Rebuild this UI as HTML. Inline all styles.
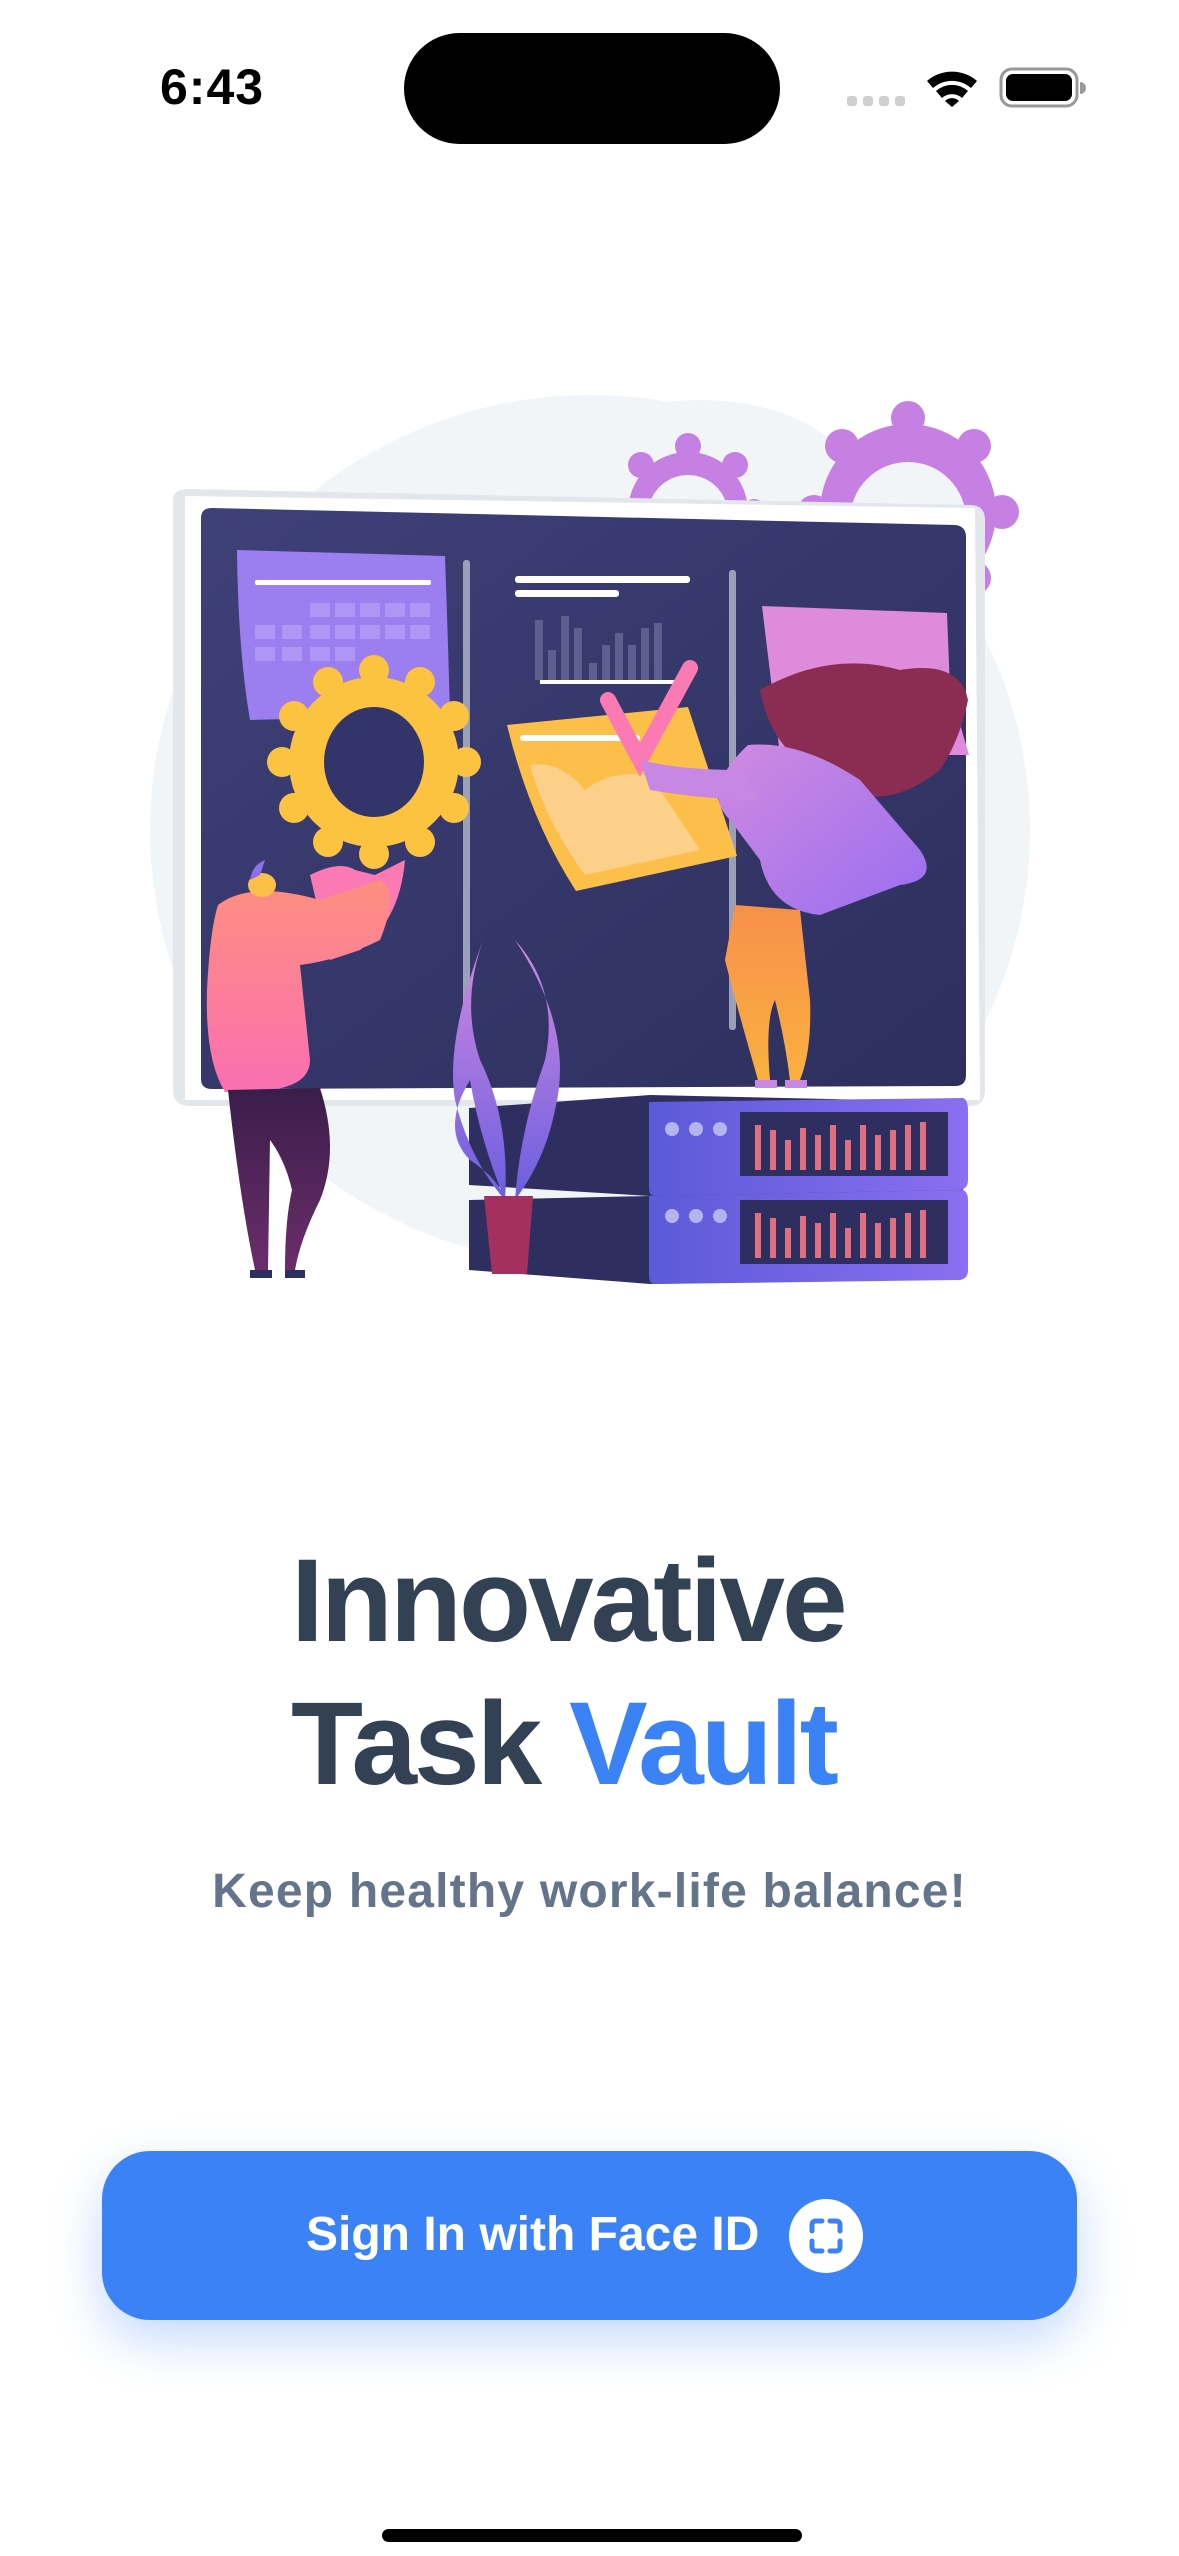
<!DOCTYPE html>
<html><head><meta charset="utf-8"><style>
html,body{margin:0;padding:0;background:#fff;}
body{width:1179px;height:2556px;position:relative;overflow:hidden;font-family:"Liberation Sans",sans-serif;}
.abs{position:absolute;}
.time{left:160px;top:58px;font-size:50px;font-weight:700;color:#000;letter-spacing:1px;}
.island{left:404px;top:33px;width:376px;height:111px;background:#000;border-radius:56px;}
.t1{left:291px;top:1530px;font-size:118px;font-weight:700;color:#334155;line-height:143px;letter-spacing:-3px;white-space:nowrap;}
.sub{left:0;width:1179px;text-align:center;top:1864px;font-size:48px;font-weight:700;color:#64748b;letter-spacing:1.2px;}
.btn{left:102px;top:2151px;width:975px;height:169px;background:#3b82f6;border-radius:48px;box-shadow:0 20px 50px rgba(59,130,246,0.3);}
.btxt{left:306px;top:2207px;font-size:48px;font-weight:700;color:#fff;}
.home{left:382px;top:2529px;width:420px;height:13px;border-radius:7px;background:#000;}
</style></head><body>
<div class="abs time">6:43</div>
<div class="abs island"></div>
<svg class="abs" style="left:0;top:0" width="1179" height="160">
<g fill="#d0d0d0"><rect x="847" y="96" width="10" height="10" rx="3"/><rect x="863" y="96" width="10" height="10" rx="3"/><rect x="879" y="96" width="10" height="10" rx="3"/><rect x="895" y="96" width="10" height="10" rx="3"/></g>
<path d="M927 81 A38 38 0 0 1 977 81 L971 88 A29 29 0 0 0 933 88Z M936 91 A24 24 0 0 1 968 91 L962 98 A15 15 0 0 0 942 98Z M945 101 A10 10 0 0 1 959 101 L952 107Z" fill="#000"/>
<rect x="1001" y="69" width="76" height="37" rx="11" fill="none" stroke="#999" stroke-width="3"/>
<rect x="1006" y="74" width="66" height="27" rx="7" fill="#000"/>
<path d="M1080 82 a5 5 0 0 1 0 12z" fill="#999"/>
</svg>

<svg class="abs" style="left:0;top:0" width="1179" height="1400">
<defs>
<linearGradient id="scr" x1="0" y1="0" x2="1" y2="1"><stop offset="0" stop-color="#3e4078"/><stop offset="1" stop-color="#2d2f5e"/></linearGradient>
<linearGradient id="pink" x1="0" y1="0" x2="0" y2="1"><stop offset="0" stop-color="#fd8f80"/><stop offset="1" stop-color="#fb6fb0"/></linearGradient>
<linearGradient id="leg" x1="0" y1="0" x2="0" y2="1"><stop offset="0" stop-color="#3a1d4a"/><stop offset="1" stop-color="#6b2d6a"/></linearGradient>
<linearGradient id="srv" x1="0" y1="0" x2="1" y2="0"><stop offset="0" stop-color="#5b5ad8"/><stop offset="1" stop-color="#8a6ff0"/></linearGradient>
<linearGradient id="dress" x1="0" y1="0" x2="1" y2="1"><stop offset="0" stop-color="#d08ae0"/><stop offset="1" stop-color="#9a6ef0"/></linearGradient>
<linearGradient id="oleg" x1="0" y1="0" x2="0" y2="1"><stop offset="0" stop-color="#f7904a"/><stop offset="1" stop-color="#fbb040"/></linearGradient>
<linearGradient id="leaf" x1="0" y1="0" x2="0" y2="1"><stop offset="0" stop-color="#d58ae0"/><stop offset="1" stop-color="#6a5ee0"/></linearGradient>
</defs>
<ellipse cx="590" cy="830" rx="440" ry="435" fill="#f2f5f8"/>
<ellipse cx="700" cy="480" rx="150" ry="80" fill="#f2f5f8"/>
<g fill="#c67fe3">
<circle cx="688" cy="512" r="60"/>
<circle cx="688" cy="446" r="13"/><circle cx="735" cy="465" r="13"/><circle cx="754" cy="512" r="13"/><circle cx="735" cy="559" r="13"/><circle cx="641" cy="465" r="13"/><circle cx="622" cy="512" r="13"/><circle cx="641" cy="559" r="13"/>
<circle cx="908" cy="512" r="88"/>
<circle cx="908" cy="418" r="17"/><circle cx="974" cy="446" r="17"/><circle cx="1002" cy="512" r="17"/><circle cx="974" cy="578" r="17"/><circle cx="842" cy="446" r="17"/><circle cx="814" cy="512" r="17"/><circle cx="842" cy="578" r="17"/>
</g>
<circle cx="688" cy="515" r="40" fill="#f2f5f8"/><circle cx="908" cy="520" r="58" fill="#f2f5f8"/>
<path d="M173 500 Q173 489 190 489 L970 505 Q985 505 985 520 L985 1090 Q985 1106 970 1106 L190 1106 Q173 1106 173 1090Z" fill="#e3e7ec"/>
<path d="M185 496 L975 508 L980 1100 L185 1100Z" fill="#fff"/>
<path d="M201 518 Q201 508 212 508 L955 525 Q966 526 966 537 L966 1075 Q966 1086 955 1086 L212 1089 Q201 1089 201 1079Z" fill="url(#scr)"/>
<rect x="463" y="560" width="7" height="480" rx="3" fill="#9aa0b8"/>
<rect x="729" y="570" width="7" height="460" rx="3" fill="#9aa0b8"/>
<path d="M237 550 L445 556 Q448 640 450 715 L250 720 Q238 650 237 550Z" fill="#9b7ef0"/>
<rect x="255" y="580" width="176" height="5" rx="2" fill="#fff"/>
<g fill="#b39cf5" opacity=".8">
<rect x="310" y="603" width="20" height="14"/><rect x="335" y="603" width="20" height="14"/><rect x="360" y="603" width="20" height="14"/><rect x="385" y="603" width="20" height="14"/><rect x="410" y="603" width="20" height="14"/>
<rect x="255" y="625" width="20" height="14"/><rect x="282" y="625" width="20" height="14"/><rect x="310" y="625" width="20" height="14"/><rect x="335" y="625" width="20" height="14"/><rect x="360" y="625" width="20" height="14"/><rect x="385" y="625" width="20" height="14"/><rect x="410" y="625" width="20" height="14"/>
<rect x="255" y="647" width="20" height="14"/><rect x="282" y="647" width="20" height="14"/><rect x="310" y="647" width="20" height="14"/><rect x="335" y="647" width="20" height="14"/>
</g>
<rect x="515" y="576" width="175" height="7" rx="3" fill="#fff"/>
<rect x="515" y="590" width="104" height="7" rx="3" fill="#fff"/>
<g fill="#5d608f"><rect x="535" y="620" width="8" height="60"/><rect x="548" y="650" width="8" height="30"/><rect x="561" y="616" width="8" height="64"/><rect x="574" y="628" width="8" height="52"/><rect x="589" y="663" width="8" height="17"/><rect x="602" y="645" width="8" height="35"/><rect x="615" y="633" width="8" height="47"/><rect x="628" y="645" width="8" height="35"/><rect x="641" y="628" width="8" height="52"/><rect x="654" y="623" width="8" height="57"/></g>
<rect x="540" y="680" width="150" height="4" fill="#fff"/>
<path d="M507 725 L688 707 L737 856 L576 891 Q530 820 507 725Z" fill="#fbbf4a"/>
<path d="M530 765 Q560 760 585 790 Q610 770 650 775 L700 850 L585 875 Q545 820 530 765Z" fill="#fcd088"/>
<rect x="520" y="735" width="120" height="6" rx="3" fill="#fff"/>
<path d="M608 700 L640 760 L690 668" stroke="#fb7ab4" stroke-width="16" fill="none" stroke-linecap="round"/>
<path d="M762 606 L947 613 L950 690 L969 755 L780 755Z" fill="#df8bdc"/>
<g fill="#fcc341">
<circle cx="374" cy="762" r="85"/>
<circle cx="374" cy="670" r="15"/><circle cx="420" cy="682" r="15"/><circle cx="454" cy="716" r="15"/><circle cx="466" cy="762" r="15"/><circle cx="454" cy="808" r="15"/><circle cx="420" cy="842" r="15"/><circle cx="374" cy="854" r="15"/><circle cx="328" cy="842" r="15"/><circle cx="294" cy="808" r="15"/><circle cx="282" cy="762" r="15"/><circle cx="294" cy="716" r="15"/><circle cx="328" cy="682" r="15"/>
</g>
<ellipse cx="374" cy="762" rx="50" ry="55" fill="#33356a"/>
<path d="M310 875 Q340 860 355 870 L375 875 L405 860 Q400 920 360 950 L330 960Z" fill="#fb7ab4"/>
<path d="M218 905 Q250 880 320 900 L380 880 Q400 890 380 940 Q340 960 300 965 L310 1060 Q310 1085 270 1090 L225 1092 Q205 1060 207 990 Q210 930 218 905Z" fill="url(#pink)"/>
<ellipse cx="262" cy="885" rx="14" ry="12" fill="#fbbf4a"/>
<path d="M250 880 Q252 865 265 860 L260 875Z" fill="#8b6ff0"/>
<path d="M228 1090 L320 1088 Q340 1150 320 1200 Q300 1240 295 1270 L285 1270 Q285 1220 292 1190 Q285 1160 270 1140 L268 1270 L255 1270 Q240 1200 228 1090Z" fill="url(#leg)"/>
<path d="M250 1270 h22 v8 h-22z M285 1270 h20 v8 h-20z" fill="#2d2f5e"/>
<path d="M760 690 Q830 650 900 670 Q960 660 968 700 Q960 740 940 770 Q890 810 840 790 L800 760 Q770 740 760 690Z" fill="#8b2d52"/>
<path d="M748 745 Q800 740 860 780 L920 850 Q940 880 900 885 L820 915 Q770 910 760 860 L730 820 Q700 790 748 745Z" fill="url(#dress)"/>
<path d="M640 760 Q680 770 740 770 L760 800 Q710 800 650 790Z" fill="#c887e3"/>
<path d="M735 905 L800 910 L810 1000 Q812 1050 800 1080 L790 1080 Q785 1040 775 1000 Q765 1020 770 1080 L758 1080 Q735 1000 725 960Z" fill="url(#oleg)"/>
<path d="M755 1080 h22 v8 h-22z M785 1080 h22 v8 h-22z" fill="#c887e3"/>
<path d="M469 1108 L650 1095 L963 1102 L963 1190 L650 1196 L469 1185Z" fill="#2e2f60"/>
<path d="M649 1102 L963 1098 Q968 1100 968 1110 L968 1180 Q968 1190 958 1190 L655 1196 Q649 1196 649 1188Z" fill="url(#srv)"/>
<path d="M469 1200 L650 1196 L963 1190 L963 1278 L650 1284 L469 1270Z" fill="#2e2f60"/>
<path d="M649 1196 L963 1190 Q968 1192 968 1200 L968 1270 Q968 1280 958 1280 L655 1284 Q649 1284 649 1276Z" fill="url(#srv)"/>
<rect x="740" y="1112" width="208" height="64" fill="#2e2f60"/>
<rect x="740" y="1200" width="208" height="64" fill="#2e2f60"/>
<g fill="#e07080"><rect x="755" y="1125" width="6" height="45"/><rect x="770" y="1130" width="6" height="40"/><rect x="785" y="1140" width="6" height="30"/><rect x="800" y="1128" width="6" height="42"/><rect x="815" y="1135" width="6" height="35"/><rect x="830" y="1125" width="6" height="45"/><rect x="845" y="1140" width="6" height="30"/><rect x="860" y="1125" width="6" height="45"/><rect x="875" y="1135" width="6" height="35"/><rect x="890" y="1130" width="6" height="40"/><rect x="905" y="1125" width="6" height="45"/><rect x="920" y="1122" width="6" height="48"/>
<rect x="755" y="1213" width="6" height="45"/><rect x="770" y="1218" width="6" height="40"/><rect x="785" y="1228" width="6" height="30"/><rect x="800" y="1216" width="6" height="42"/><rect x="815" y="1223" width="6" height="35"/><rect x="830" y="1213" width="6" height="45"/><rect x="845" y="1228" width="6" height="30"/><rect x="860" y="1213" width="6" height="45"/><rect x="875" y="1223" width="6" height="35"/><rect x="890" y="1218" width="6" height="40"/><rect x="905" y="1213" width="6" height="45"/><rect x="920" y="1210" width="6" height="48"/></g>
<g fill="#b4b4ee"><circle cx="672" cy="1129" r="7"/><circle cx="696" cy="1129" r="7"/><circle cx="720" cy="1129" r="7"/><circle cx="672" cy="1216" r="7"/><circle cx="696" cy="1216" r="7"/><circle cx="720" cy="1216" r="7"/></g>
<path d="M485 935 Q460 1000 480 1060 Q510 1120 505 1200 Q470 1160 455 1100 Q445 1040 485 935Z M515 940 Q560 990 545 1060 Q520 1130 515 1200 Q545 1160 555 1110 Q575 1030 515 940Z M470 1080 Q440 1130 470 1160 Q500 1180 505 1200 Q480 1140 470 1080Z" fill="url(#leaf)"/>
<path d="M484 1196 L533 1196 L527 1274 L492 1274Z" fill="#a3305f"/>
</svg>

<div class="abs t1">Innovative<br>Task <span style="color:#3b82f6">Vault</span></div>
<div class="abs sub">Keep healthy work-life balance!</div>
<div class="abs btn"></div>
<div class="abs btxt">Sign In with Face ID</div>
<svg class="abs" style="left:789px;top:2199px" width="74" height="74">
<circle cx="37" cy="37" r="37" fill="#fff"/>
<path d="M23 32 v-6 q0-4 4-4 h6 M41 22 h6 q4 0 4 4 v6 M51 42 v6 q0 4-4 4 h-6 M33 52 h-6 q-4 0-4-4 v-6" stroke="#3b82f6" stroke-width="5" fill="none" stroke-linecap="round"/>
</svg>
<div class="abs home"></div>
</body></html>
